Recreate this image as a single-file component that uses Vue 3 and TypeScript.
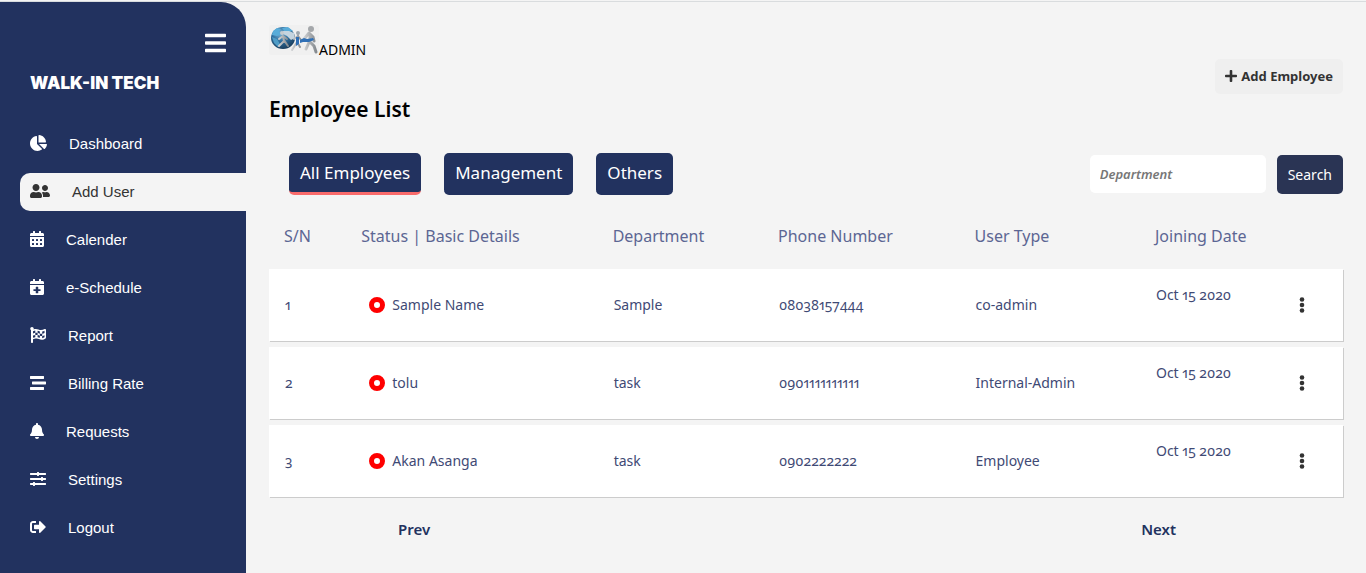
<script setup lang="ts">
import { ref } from 'vue'

interface NavItem {
  label: string
  viewWidth: number
  path: string
}

interface Employee {
  id: number
  name: string
  department: string
  phone: string
  userType: string
  joined: string
}

const calendarTop =
  'M400 64h-48V16c0-8.800-7.200-16-16-16h-32c-8.800 0-16 7.200-16 16v48H160V16c0-8.800-7.200-16-16-16h-32c-8.800 0-16 7.200-16 16v48H48C21.500 64 0 85.500 0 112v48h448v-48c0-26.500-21.500-48-48-48z'
const calendarBody = 'M0 464c0 26.500 21.500 48 48 48h352c26.500 0 48-21.500 48-48V192H0z'
const calendarDays = [64, 192, 320]
  .flatMap((x) => [256, 384].map((y) => `M${x} ${y + 12}v40q0 12 12 12h40q12 0 12-12v-40q0-12-12-12h-40q-12 0-12 12z`))
  .join('')

const navItems: NavItem[] = [
  {
    label: 'Dashboard',
    viewWidth: 544,
    path: 'M527.79 288H290.5l158.03 158.03c6.04 6.04 15.98 6.53 22.19.68 38.7-36.46 65.32-85.61 73.13-140.86 1.34-9.46-6.51-17.85-16.06-17.85zm-15.83-64.8C503.72 103.74 408.26 8.28 288.8.04 279.68-.59 272 7.1 272 16.24V240h223.77c9.14 0 16.82-7.68 16.19-16.8zM224 288V50.71c0-9.55-8.39-17.4-17.84-16.06C86.99 51.49-4.1 155.6.14 280.37 4.5 408.51 114.83 513.59 243.03 511.98c50.4-.63 96.97-16.87 135.26-44.03 7.9-5.6 8.42-17.23 1.57-24.08L224 288z',
  },
  {
    label: 'Add User',
    viewWidth: 640,
    path: 'M192 256c61.9 0 112-50.1 112-112S253.9 32 192 32 80 82.1 80 144s50.1 112 112 112zm76.8 32h-8.3c-20.8 10-43.9 16-68.5 16s-47.6-6-68.5-16h-8.3C51.6 288 0 339.6 0 403.2V432c0 26.5 21.5 48 48 48h288c26.5 0 48-21.5 48-48v-28.8c0-63.6-51.6-115.2-115.2-115.2zM480 256c53 0 96-43 96-96s-43-96-96-96-96 43-96 96 43 96 96 96zm48 32h-3.8c-13.9 4.8-28.6 8-44.2 8s-30.3-3.2-44.2-8H432c-20.4 0-39.2 5.900-55.700 15.400 24.400 26.300 39.700 61.200 39.700 99.800v38.400c0 2.200-.5 4.300-.6 6.400H592c26.500 0 48-21.500 48-48 0-61.900-50.100-112-112-112z',
  },
  { label: 'Calender', viewWidth: 448, path: calendarTop + calendarBody + calendarDays },
  {
    label: 'e-Schedule',
    viewWidth: 448,
    path: calendarTop + calendarBody + 'M196 248q-12 0-12 12v64h-64q-12 0-12 12v32q0 12 12 12h64v64q0 12 12 12h56q12 0 12-12v-64h64q12 0 12-12v-32q0-12-12-12h-64v-64q0-12-12-12z',
  },
  {
    label: 'Report',
    viewWidth: 512,
    path: 'M243.2 189.9V258c26.1 5.9 49.3 15.6 73.6 22.3v-68.2c-26-5.8-49.4-15.5-73.6-22.2zm223.3-123c-34.3 15.9-76.5 31.9-117 31.9C296 98.8 251.7 64 184.3 64c-25 0-47.3 4.4-68 12 2.8-7.3 4.1-15.2 3.6-23.6C118.1 24 94.8 1.2 66.3 0 34.3-1.3 8 24.3 8 56c0 19 9.5 35.8 24 45.9V488c0 13.3 10.7 24 24 24h16c13.3 0 24-10.7 24-24v-94.4c28.3-12.1 63.6-22.1 114.4-22.1 53.6 0 97.8 34.8 165.2 34.8 48.2 0 86.7-16.3 122.5-40.9 8.7-6 13.8-15.8 13.8-26.4V95.9c.1-23.3-24.2-38.8-45.4-29zM169.6 325.5c-25.8 2.7-50 8.2-73.6 16.6v-70.5c26.2-9.3 47.5-15 73.6-17.4v71.3zM464 191c-23.6 9.8-46.3 19.5-73.6 23.9V286c24.8-3.4 51.4-11.8 73.6-26v70.5c-25.1 16.1-48.5 24.7-73.6 27.1V286c-27 3.7-47.9 1.5-73.6-5.6v67.4c-23.9-7.4-47.3-16.7-73.6-21.3V258c-19.7-4.4-40.8-6.8-73.6-3.8v-70c-22.4 3.1-44.6 10.2-73.6 20.9v-70.5c33.2-12.2 50.1-19.8 73.6-22v71.6c27-3.7 48.4-1.3 73.6 5.7v-67.4c23.7 7.4 47.2 16.7 73.6 21.3v68.4c23.7 5.3 47.6 6.9 73.6 2.7V143c27-4.8 52.3-13.6 73.6-22.5z',
  },
  {
    label: 'Billing Rate',
    viewWidth: 512,
    path: 'M16 128h416c8.84 0 16-7.16 16-16V48c0-8.84-7.16-16-16-16H16C7.16 32 0 39.16 0 48v64c0 8.84 7.16 16 16 16zm480 80H80c-8.84 0-16 7.16-16 16v64c0 8.84 7.16 16 16 16h416c8.84 0 16-7.16 16-16v-64c0-8.84-7.16-16-16-16zm-64 176H16c-8.84 0-16 7.16-16 16v64c0 8.84 7.16 16 16 16h416c8.84 0 16-7.16 16-16v-64c0-8.84-7.16-16-16-16z',
  },
  {
    label: 'Requests',
    viewWidth: 448,
    path: 'M224 512c35.32 0 63.97-28.65 63.97-64H160.03c0 35.35 28.65 64 63.97 64zm215.39-149.71c-19.32-20.76-55.47-51.99-55.47-154.29 0-77.7-54.48-139.9-127.94-155.16V32c0-17.67-14.32-32-31.98-32s-31.98 14.33-31.98 32v20.84C118.56 68.1 64.08 130.3 64.08 208c0 102.3-36.15 133.53-55.47 154.29-6 6.45-8.66 14.16-8.61 21.71.11 16.4 12.98 32 32.1 32h383.8c19.12 0 32-15.6 32.1-32 .05-7.55-2.61-15.27-8.61-21.71z',
  },
  {
    label: 'Settings',
    viewWidth: 512,
    path: 'M496 384H160v-16c0-8.8-7.2-16-16-16h-32c-8.8 0-16 7.2-16 16v16H16c-8.8 0-16 7.2-16 16v32c0 8.8 7.2 16 16 16h80v16c0 8.8 7.2 16 16 16h32c8.8 0 16-7.2 16-16v-16h336c8.8 0 16-7.2 16-16v-32c0-8.8-7.2-16-16-16zm0-160h-80v-16c0-8.8-7.2-16-16-16h-32c-8.8 0-16 7.2-16 16v16H16c-8.8 0-16 7.2-16 16v32c0 8.8 7.2 16 16 16h336v16c0 8.8 7.2 16 16 16h32c8.8 0 16-7.2 16-16v-16h80c8.8 0 16-7.2 16-16v-32c0-8.8-7.2-16-16-16zm0-160H288V48c0-8.8-7.2-16-16-16h-32c-8.8 0-16 7.2-16 16v16H16C7.2 64 0 71.2 0 80v32c0 8.8 7.2 16 16 16h208v16c0 8.8 7.2 16 16 16h32c8.8 0 16-7.2 16-16v-16h208c8.8 0 16-7.2 16-16V80c0-8.8-7.2-16-16-16z',
  },
  {
    label: 'Logout',
    viewWidth: 512,
    path: 'M497 273L329 441c-15 15-41 4.5-41-17v-96H152c-13.3 0-24-10.7-24-24v-96c0-13.3 10.7-24 24-24h136V88c0-21.4 25.9-32 41-17l168 168c9.3 9.4 9.3 24.6 0 34zM192 436v-40c0-6.6-5.4-12-12-12H96c-17.7 0-32-14.3-32-32V160c0-17.7 14.3-32 32-32h84c6.6 0 12-5.4 12-12V76c0-6.6-5.4-12-12-12H96c-53 0-96 43-96 96v192c0 53 43 96 96 96h84c6.6 0 12-5.4 12-12z',
  },
]

const employees: Employee[] = [
  { id: 1, name: 'Sample Name', department: 'Sample', phone: '08038157444', userType: 'co-admin', joined: 'Oct 15 2020' },
  { id: 2, name: 'tolu', department: 'task', phone: '0901111111111', userType: 'Internal-Admin', joined: 'Oct 15 2020' },
  { id: 3, name: 'Akan Asanga', department: 'task', phone: '0902222222', userType: 'Employee', joined: 'Oct 15 2020' },
]

const tabs = ['All Employees', 'Management', 'Others']
const activeNav = ref('Add User')
const activeTab = ref('All Employees')
const departmentQuery = ref('')
</script>

<template>
  <div class="page">
    <aside class="sidebar">
      <button class="menu-toggle" type="button" aria-label="Toggle menu">
        <svg width="21" height="24" viewBox="0 0 448 512" aria-hidden="true">
          <path d="M16 132h416c8.800 0 16-7.200 16-16V76c0-8.800-7.200-16-16-16H16C7.200 60 0 67.200 0 76v40c0 8.800 7.200 16 16 16zm0 160h416c8.800 0 16-7.200 16-16v-40c0-8.800-7.200-16-16-16H16c-8.800 0-16 7.200-16 16v40c0 8.800 7.200 16 16 16zm0 160h416c8.800 0 16-7.200 16-16v-40c0-8.800-7.200-16-16-16H16c-8.800 0-16 7.200-16 16v40c0 8.800 7.200 16 16 16z" />
        </svg>
      </button>
      <div class="company">WALK-IN TECH</div>
      <nav class="nav">
        <a
          v-for="item in navItems"
          :key="item.label"
          href="#"
          class="nav-link"
          :class="{ active: item.label === activeNav }"
          @click.prevent="activeNav = item.label"
        >
          <svg :width="item.viewWidth / 32" height="16" :viewBox="`0 0 ${item.viewWidth} 512`" aria-hidden="true">
            <path fill-rule="evenodd" :d="item.path" />
          </svg>
          <span>{{ item.label }}</span>
        </a>
      </nav>
    </aside>

    <main class="content">
      <header class="brand">
        <svg class="logo" width="50" height="30" viewBox="0 0 50 30" aria-hidden="true">
          <defs>
            <radialGradient id="globe" cx="40%" cy="30%" r="70%">
              <stop offset="0" stop-color="#7ab4d8" />
              <stop offset="0.500" stop-color="#2f6f9f" />
              <stop offset="1" stop-color="#1b3f5f" />
            </radialGradient>
            <linearGradient id="figure" x1="0" x2="1">
              <stop offset="0" stop-color="#cfd1d3" />
              <stop offset="1" stop-color="#858a8f" />
            </linearGradient>
          </defs>
          <rect width="50" height="30" rx="2" fill="#f0f0f0" />
          <ellipse cx="14" cy="13" rx="12" ry="11" fill="url(#globe)" />
          <path d="M4 6l4-3 4 1-2 3 3 2-5 2-5-1zM13 3l6-1 5 4-4 1-4 0z" fill="#58acd9" />
          <path d="M14 6l6 0 5 2 1 5-4 2-4-4-4-2z" fill="#c5d4df" />
          <path d="M3 12l5 2 3 5-2 3-4-4z" fill="#4f9cc6" />
          <g fill="none" stroke="url(#figure)" stroke-linecap="round" stroke-linejoin="round">
            <path d="M14 11l1 5-5 5M15 15l4 6M10 14l4-3 4 3" stroke-width="2" />
            <path d="M29 10l-1 7-5 8M28 17l3 5M25 14l4-3 3 4" stroke-width="2" />
            <path d="M41 9l0 6-4 9M40 16l5 5 2 6M35 14l5-6 4 4 1 4" stroke-width="3" />
          </g>
          <circle cx="13" cy="8" r="2" fill="#c6cbd0" />
          <circle cx="29" cy="8" r="2" fill="#9fa7ae" />
          <circle cx="42" cy="4" r="3" fill="#a4a7aa" />
          <path d="M27 12l3 0 0 7-3 2zM31 15l4-2 3 1 6-1 1 2-5 2-6 0-3 1z" fill="#2f6fb5" />
        </svg>
        <span>ADMIN</span>
      </header>

      <button class="add-employee" type="button">
        <svg width="12" height="14" viewBox="0 0 448 512" aria-hidden="true">
          <path d="M416 208H272V64c0-17.670-14.330-32-32-32h-32c-17.670 0-32 14.330-32 32v144H32c-17.670 0-32 14.330-32 32v32c0 17.670 14.330 32 32 32h144v144c0 17.670 14.330 32 32 32h32c17.670 0 32-14.330 32-32V304h144c17.670 0 32-14.330 32-32v-32c0-17.670-14.330-32-32-32z" />
        </svg>
        <span>Add Employee</span>
      </button>

      <h1 class="title">Employee List</h1>

      <div class="toolbar">
        <div class="tabs">
          <button
            v-for="tab in tabs"
            :key="tab"
            type="button"
            class="tab"
            :class="{ active: tab === activeTab }"
            @click="activeTab = tab"
          >
            {{ tab }}
          </button>
        </div>
        <form class="search" @submit.prevent>
          <input v-model="departmentQuery" class="search-input" type="text" placeholder="Department" aria-label="Department" />
          <button class="search-button" type="submit">Search</button>
        </form>
      </div>

      <table class="employees">
        <colgroup>
          <col class="col-index" />
          <col class="col-details" />
          <col class="col-department" />
          <col class="col-phone" />
          <col class="col-type" />
          <col class="col-joined" />
          <col class="col-actions" />
        </colgroup>
        <thead>
          <tr>
            <th>S/N</th>
            <th>Status | Basic Details</th>
            <th>Department</th>
            <th>Phone Number</th>
            <th>User Type</th>
            <th>Joining Date</th>
            <th></th>
          </tr>
        </thead>
        <tbody>
          <tr v-for="employee in employees" :key="employee.id">
            <td>{{ employee.id }}</td>
            <td>
              <div class="person">
                <span class="status"></span>
                <span>{{ employee.name }}</span>
              </div>
            </td>
            <td>{{ employee.department }}</td>
            <td>{{ employee.phone }}</td>
            <td>{{ employee.userType }}</td>
            <td class="joined">{{ employee.joined }}</td>
            <td>
              <button class="more" type="button" :aria-label="`Actions for ${employee.name}`">
                <svg width="6" height="16" viewBox="0 0 6 16" aria-hidden="true">
                  <circle cx="3" cy="2.500" r="2.300" />
                  <circle cx="3" cy="8" r="2.300" />
                  <circle cx="3" cy="13.500" r="2.300" />
                </svg>
              </button>
            </td>
          </tr>
        </tbody>
      </table>

      <div class="pager">
        <button type="button">Prev</button>
        <button type="button">Next</button>
      </div>
    </main>
  </div>
</template>

<style>
body {
  margin: 0;
  background: #f4f4f4;
}
</style>

<style scoped>
.page {
  box-sizing: border-box;
  display: flex;
  min-height: 100vh;
  padding-top: 1px;
  background: linear-gradient(#d9dcde, #d9dcde) 0 1px / 100% 1px no-repeat #f4f4f4;
  font-family: 'Noto Sans', 'Open Sans', sans-serif;
  font-variant-numeric: oldstyle-nums proportional-nums;
}

button,
input {
  font-family: inherit;
}

button {
  border: 0;
  cursor: pointer;
}

svg {
  display: block;
  flex: none;
  fill: currentColor;
}

.sidebar {
  box-sizing: border-box;
  display: flex;
  flex: 0 0 246px;
  flex-direction: column;
  margin-top: 1px;
  padding: 29px 0 20px 20px;
  border-top-right-radius: 25px;
  background: #22325f;
  color: #fff;
  font-family: 'Liberation Sans', Arial, sans-serif;
}

.menu-toggle {
  align-self: flex-end;
  margin-right: 20px;
  padding: 0;
  background: none;
  color: #fff;
}

.company {
  margin: 16px 0 30px 10px;
  font-family: Inter, 'Liberation Sans', sans-serif;
  font-size: 17px;
  font-weight: 900;
  line-height: 24px;
}

.nav {
  display: flex;
  flex-direction: column;
  gap: 10px;
}

.nav-link {
  box-sizing: border-box;
  display: flex;
  align-items: center;
  gap: 22px;
  height: 38px;
  padding: 0 0 2px 10px;
  border-radius: 10px 0 0 10px;
  color: #fff;
  font-size: 15px;
  text-decoration: none;
}

.nav-link.active {
  background: #f4f4f4;
  color: #333;
}

.content {
  display: flex;
  flex: 1;
  flex-direction: column;
  min-width: 0;
  padding: 24px 23px 20px;
}

.brand {
  display: flex;
  align-items: flex-end;
  height: 34px;
  color: #000;
  font-size: 14px;
  line-height: 18px;
}

.logo {
  align-self: flex-start;
}

.add-employee {
  display: flex;
  align-items: center;
  align-self: flex-end;
  gap: 4px;
  height: 35px;
  padding: 0 10px 2px;
  border-radius: 5px;
  background: #efefef;
  color: #333;
  font-size: 13px;
  font-weight: 700;
}

.title {
  margin: 0;
  color: #000;
  font-size: 21px;
  font-weight: 600;
  line-height: 30px;
}

.toolbar {
  display: flex;
  align-items: center;
  justify-content: space-between;
  margin-top: 29px;
  padding-left: 20px;
}

.tabs {
  display: flex;
  gap: 23px;
}

.tab {
  height: 42px;
  padding: 0 11px;
  border-bottom: 3px solid #22325f;
  border-radius: 5px;
  background: #22325f;
  color: #fff;
  font-size: 17px;
}

.tab.active {
  border-bottom-color: #f96b6b;
}

.search {
  display: flex;
  align-items: center;
  gap: 11px;
}

.search-input {
  box-sizing: border-box;
  width: 176px;
  height: 38px;
  padding: 0 10px;
  border: 0;
  border-radius: 5px;
  background: #fff;
  color: #333;
  font-size: 13px;
  font-weight: 600;
}

.search-input::placeholder {
  color: #777;
  font-style: italic;
  opacity: 1;
}

.search-button {
  height: 39px;
  padding: 0 11px;
  border-radius: 5px;
  background: #2a3454;
  color: #fff;
  font-size: 14px;
}

.employees {
  width: 100%;
  margin-top: 18px;
  border-spacing: 0 6px;
  table-layout: fixed;
}

.col-index {
  width: 7.2%;
}

.col-details {
  width: 23.4%;
}

.col-department {
  width: 15.4%;
}

.col-phone {
  width: 18.3%;
}

.col-type {
  width: 16.8%;
}

.col-joined {
  width: 13.3%;
}

.col-actions {
  width: 5.6%;
}

.employees th {
  height: 34px;
  padding: 0 0 10px 15px;
  color: #5c6693;
  font-size: 16px;
  font-weight: 400;
  text-align: left;
}

.employees td {
  height: 72px;
  padding: 0 0 0 16px;
  color: #3f4a75;
  font-size: 14px;
  line-height: 20px;
}

.employees tbody tr {
  background: #fff;
  box-shadow: 1px 1px 0 #ccc;
}

.employees .joined {
  height: 52px;
  padding-bottom: 20px;
}

.person {
  display: flex;
  align-items: center;
  gap: 7px;
  padding-left: 7px;
}

.status {
  box-sizing: border-box;
  width: 16px;
  height: 16px;
  border: 5px solid #f00;
  border-radius: 50%;
}

.more {
  display: block;
  padding: 0 10px 0 0;
  background: none;
  color: #333;
}

.pager {
  display: flex;
  justify-content: space-between;
  margin-top: 14px;
  padding: 0 167px 0 129px;
}

.pager button {
  padding: 0;
  background: none;
  color: #22325f;
  font-size: 15px;
  font-weight: 600;
  line-height: 24px;
}
</style>
